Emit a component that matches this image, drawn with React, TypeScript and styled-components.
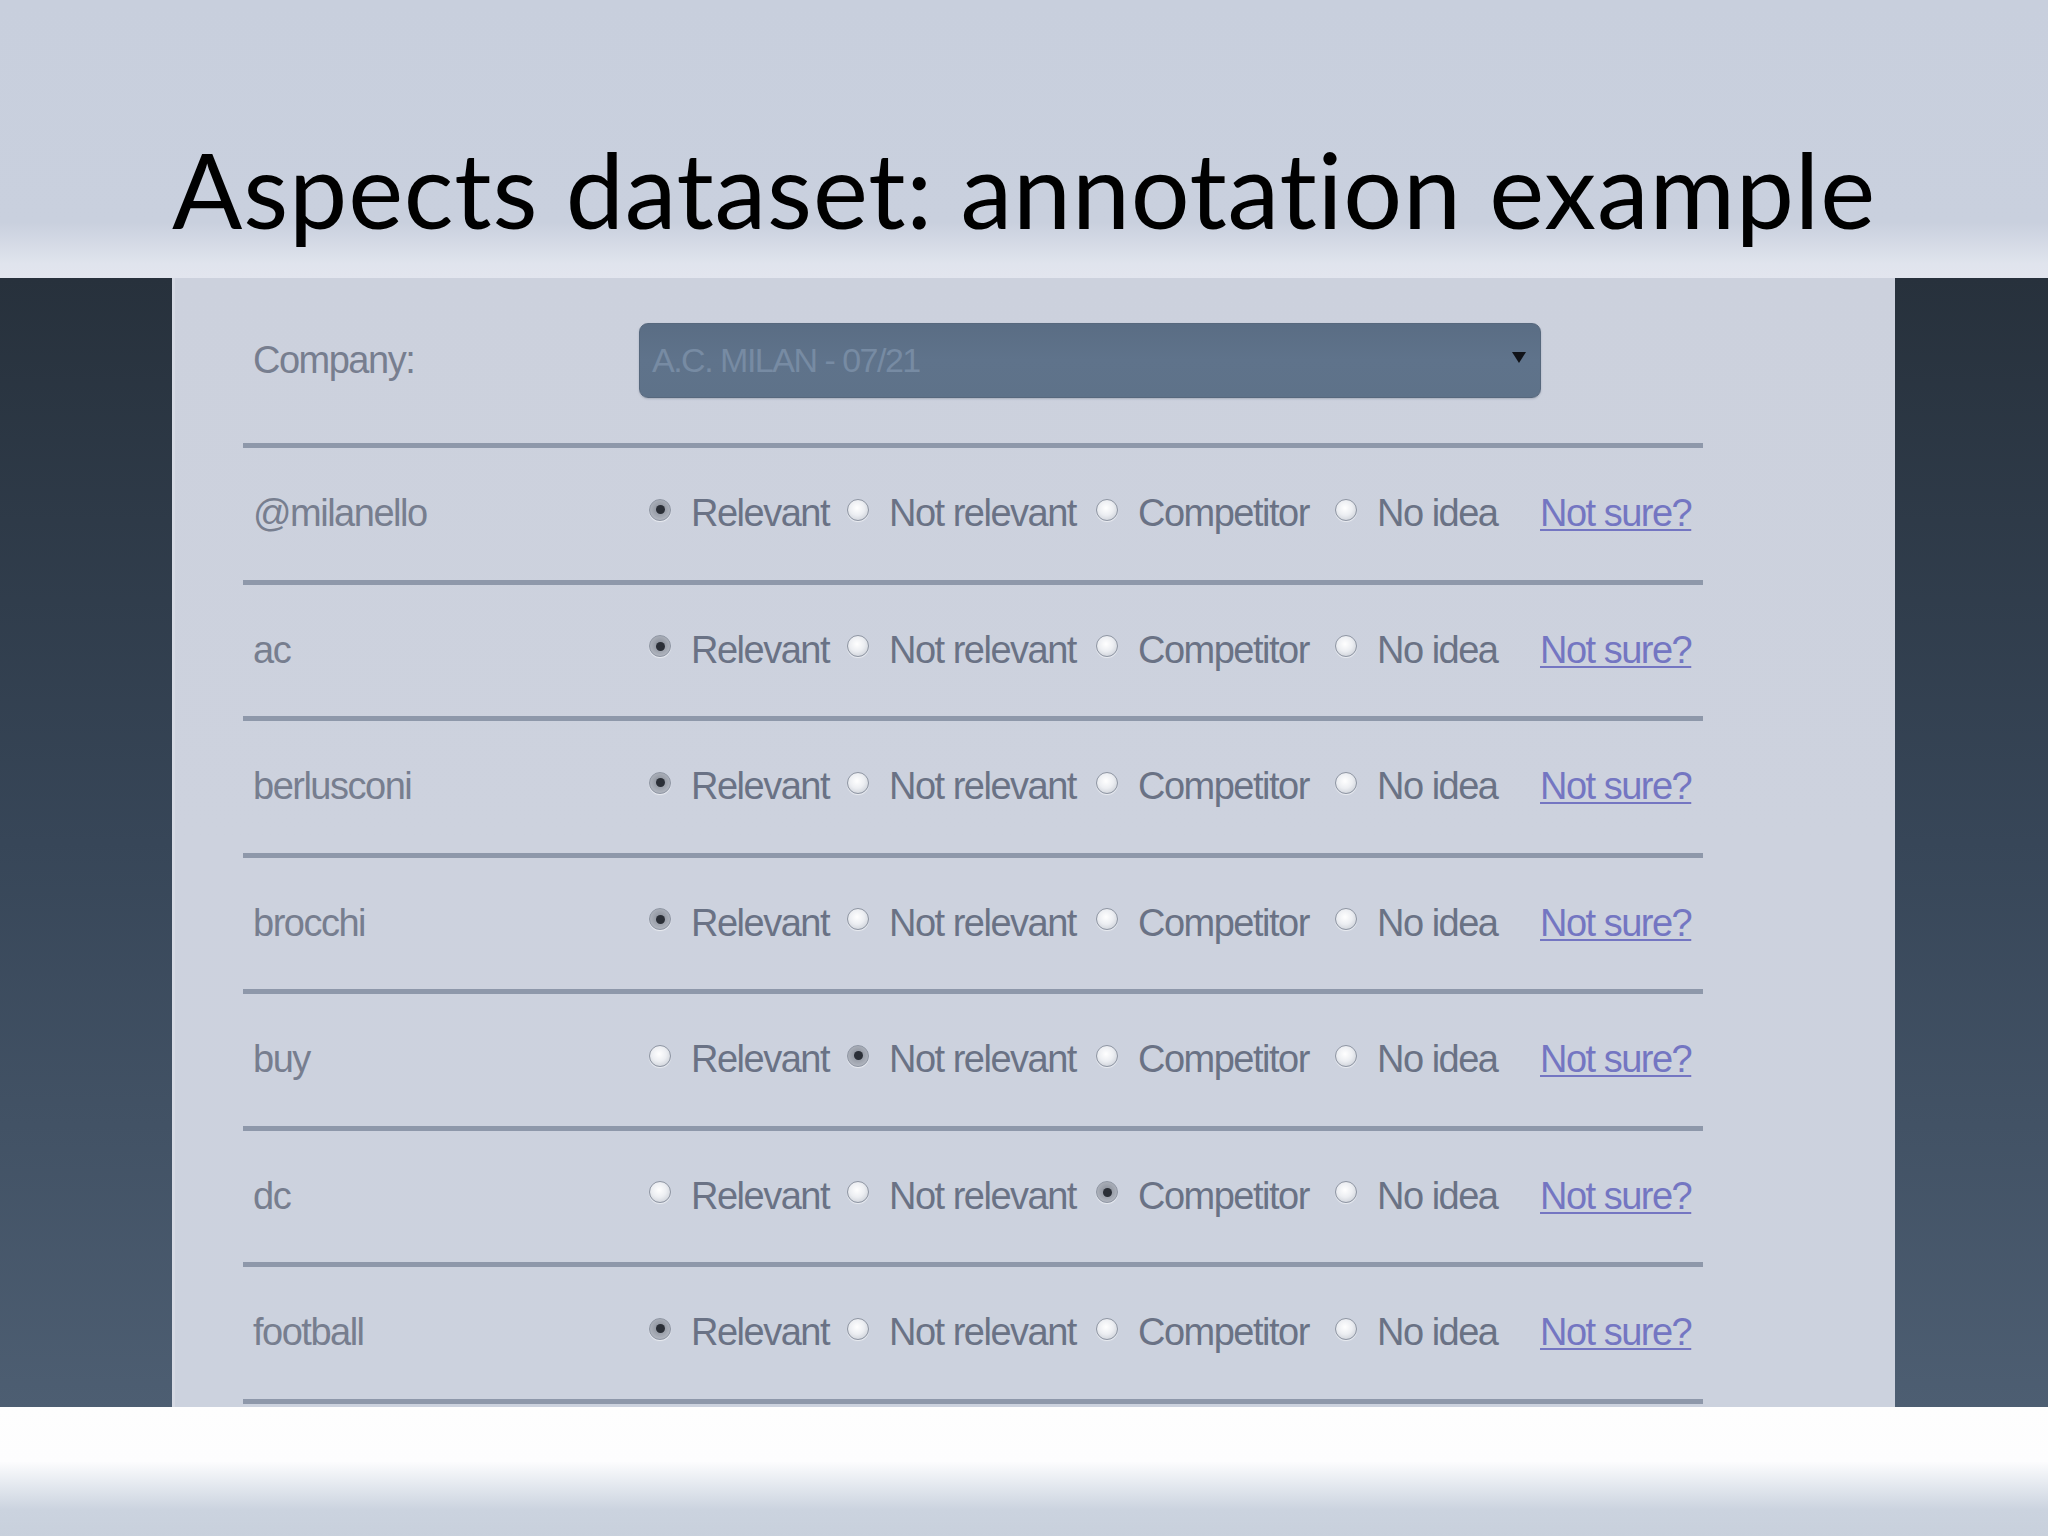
import React from "react";
import styled, { createGlobalStyle } from "styled-components";

const GlobalStyle = createGlobalStyle`
  html, body {
    margin: 0;
    padding: 0;
    width: 2048px;
    height: 1536px;
    overflow: hidden;
    background: #ffffff;
  }
  * { box-sizing: border-box; }
`;

const Slide = styled.div`
  width: 2048px;
  height: 1536px;
  display: flex;
  flex-direction: column;
`;

const Header = styled.header`
  flex: none;
  height: 278px;
  display: flex;
  align-items: flex-end;
  padding-left: 172px;
  background: linear-gradient(
    to bottom,
    #c8cfdd 0%,
    #c9d0de 80%,
    #e0e4ed 95%,
    #e2e5ee 100%
  );
`;

const Title = styled.h1`
  margin: 0 0 37px 0;
  font-family: Lato, "Open Sans", sans-serif;
  font-weight: 400;
  font-size: 104px;
  line-height: 1;
  letter-spacing: 0.8px;
  font-variant-ligatures: none;
  color: #000000;
  white-space: nowrap;
`;

const Stage = styled.main`
  flex: none;
  height: 1129px;
  display: flex;
  padding: 0 153px 0 172px;
  background: linear-gradient(to bottom, #27313c 0%, #374658 50%, #4d5e72 100%);
`;

const Panel = styled.section`
  flex: 1;
  overflow: hidden;
  padding-left: 68px;
  border-left: 3px solid #d5d9e3;
  background: linear-gradient(to bottom, #ccd1dd 0%, #cdd2de 50%, #ccd2de 100%);
`;

const Form = styled.div`
  width: 1460px;
  display: flex;
  flex-direction: column;
`;

const CompanyRow = styled.div`
  display: grid;
  grid-template-columns: 386px 902px;
  align-items: center;
  padding: 45px 0 45px 10px;
  border-bottom: 5px solid #8e98aa;
`;

const AspectRow = styled.div`
  display: grid;
  grid-template-columns: 396px 198px 249px 239px 205px auto;
  align-items: center;
  height: 136.5px;
  padding-left: 10px;
  border-bottom: 5px solid #8e98aa;
`;

const FieldLabel = styled.span`
  font-family: "Liberation Sans", Arial, sans-serif;
  font-size: 38px;
  letter-spacing: -1.5px;
  color: #777e8f;
  white-space: nowrap;
`;

const Select = styled.div`
  height: 75px;
  display: flex;
  align-items: center;
  justify-content: space-between;
  padding: 0 14px 0 12px;
  border-radius: 9px;
  border: 1px solid #57687d;
  background: linear-gradient(to bottom, #5a6d84 0%, #5f738b 50%, #5e7289 100%);
  box-shadow: 0 1px 2px rgba(60, 70, 90, 0.25);
`;

const SelectText = styled.span`
  font-family: "Liberation Sans", Arial, sans-serif;
  font-size: 34px;
  letter-spacing: -1.5px;
  color: #778ba3;
  white-space: nowrap;
`;

const Arrow = styled.svg`
  width: 14px;
  height: 11px;
  margin-bottom: 6px;
  flex: none;
`;

const Option = styled.label`
  display: flex;
  align-items: center;
  gap: 20px;
`;

const Radio = styled.span<{ $checked?: boolean }>`
  flex: none;
  width: 22px;
  height: 22px;
  margin-bottom: 8px;
  border-radius: 50%;
  border: 1px solid #8f96a3;
  display: grid;
  place-items: center;
  background: ${(p) =>
    p.$checked
      ? "radial-gradient(circle at 50% 45%, #868b96 0%, #a5aab4 55%, #c2c6cf 100%)"
      : "radial-gradient(circle at 45% 40%, #ffffff 0%, #eceef2 45%, #bfc4cd 100%)"};
  box-shadow: 0 1px 1px rgba(255, 255, 255, 0.6);

  &::after {
    content: "";
    display: ${(p) => (p.$checked ? "block" : "none")};
    width: 9px;
    height: 9px;
    border-radius: 50%;
    background: #2b2f37;
  }
`;

const OptionText = styled.span`
  font-family: "Liberation Sans", Arial, sans-serif;
  font-size: 38px;
  letter-spacing: -1.5px;
  color: #6a7285;
  white-space: nowrap;
`;

const HelpLink = styled.a`
  font-family: "Liberation Sans", Arial, sans-serif;
  font-size: 38px;
  letter-spacing: -1.5px;
  color: #7476c2;
  text-decoration: underline;
  text-decoration-thickness: 2px;
  text-underline-offset: 3px;
  white-space: nowrap;
  cursor: pointer;
`;

const Footer = styled.footer`
  flex: 1;
  background: linear-gradient(
    to bottom,
    #fefefe 0%,
    #fdfdfe 42%,
    #e2e7ee 62%,
    #cbd3df 80%,
    #c8d0dc 100%
  );
`;

const CHOICES = ["Relevant", "Not relevant", "Competitor", "No idea"];

const ASPECTS: { term: string; choice: number }[] = [
  { term: "@milanello", choice: 0 },
  { term: "ac", choice: 0 },
  { term: "berlusconi", choice: 0 },
  { term: "brocchi", choice: 0 },
  { term: "buy", choice: 1 },
  { term: "dc", choice: 2 },
  { term: "football", choice: 0 },
];

export default function App() {
  return (
    <>
      <GlobalStyle />
      <Slide>
        <Header>
          <Title>Aspects dataset: annotation example</Title>
        </Header>
        <Stage>
          <Panel>
            <Form>
              <CompanyRow>
                <FieldLabel>Company:</FieldLabel>
                <Select>
                  <SelectText>A.C. MILAN - 07/21</SelectText>
                  <Arrow viewBox="0 0 14 11">
                    <polygon points="0,0 14,0 7,11" fill="#111318" />
                  </Arrow>
                </Select>
              </CompanyRow>
              {ASPECTS.map((a) => (
                <AspectRow key={a.term}>
                  <FieldLabel>{a.term}</FieldLabel>
                  {CHOICES.map((c, i) => (
                    <Option key={c}>
                      <Radio $checked={a.choice === i} />
                      <OptionText>{c}</OptionText>
                    </Option>
                  ))}
                  <HelpLink>Not sure?</HelpLink>
                </AspectRow>
              ))}
            </Form>
          </Panel>
        </Stage>
        <Footer />
      </Slide>
    </>
  );
}
